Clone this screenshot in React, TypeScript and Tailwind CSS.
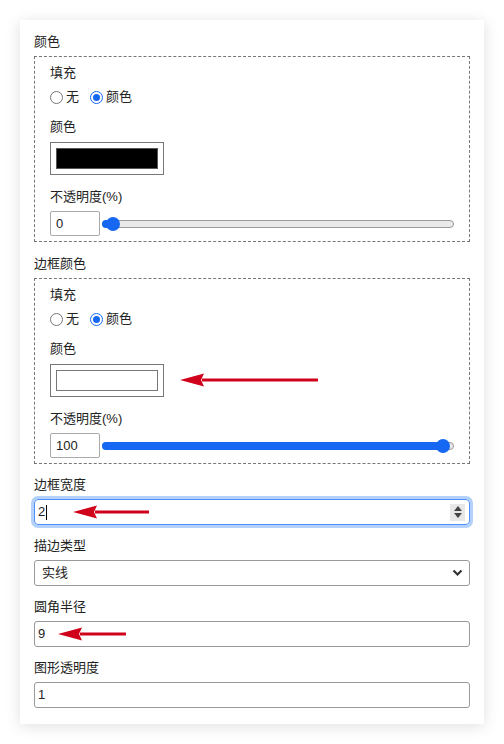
import React from "react";

const font = { fontFamily: '"Liberation Sans", "Noto Sans CJK SC", sans-serif' };

function Radio({ checked }: { checked?: boolean }) {
  return checked ? (
    <span className="flex h-[13px] w-[13px] items-center justify-center rounded-full border-[1.5px] border-[#1668f2] bg-white">
      <span className="h-[7px] w-[7px] rounded-full bg-[#1668f2]" />
    </span>
  ) : (
    <span className="h-[13px] w-[13px] rounded-full border border-[#767676] bg-white" />
  );
}

function Arrow({ width }: { width: number }) {
  return (
    <svg width={width} height="14" viewBox={`0 0 ${width} 14`}>
      <path d={`M22 5.5 H${width} V8.5 H22 Z`} fill="#d0021b" />
      <path d="M0 7 L24 0.5 L21 7 L24 13.5 Z" fill="#d0021b" />
    </svg>
  );
}

function Slider({ value }: { value: number }) {
  // thumb travels 330px inside a 352px track
  const left = 4 + value * 3.3;
  return (
    <div className="relative ml-[2px] h-[14px] w-[352px]">
      <div className="absolute left-0 right-0 top-[3px] h-[8px] rounded-full border border-[#999] bg-[#e9e9e9]" />
      <div
        className="absolute left-0 top-[3px] h-[8px] rounded-full bg-[#1668f2]"
        style={{ width: left + 7 }}
      />
      <div
        className="absolute top-0 h-[14px] w-[14px] rounded-full bg-[#1668f2]"
        style={{ left }}
      />
    </div>
  );
}

function ColorBlock({ dark, arrow }: { dark?: boolean; arrow?: boolean }) {
  return (
    <div className="border border-dashed border-[#777] px-[15px] pb-[5px] pt-[6px]">
      <div className="h-[20px] leading-[20px]">填充</div>
      <div className="mt-[4px] flex h-[20px] items-center">
        <Radio />
        <span className="ml-[3px]">无</span>
        <span className="ml-[11px]">
          <Radio checked />
        </span>
        <span className="ml-[3px]">颜色</span>
      </div>
      <div className="mt-[10px] h-[20px] leading-[20px]">颜色</div>
      <div className="relative mt-[5px] flex items-center">
        <div className="h-[33px] w-[114px] border border-[#777] bg-white p-[5px]">
          <div className={dark ? "h-full w-full border border-[#555] bg-black" : "h-full w-full border border-[#777] bg-white"} />
        </div>
        {arrow && (
          <div className="absolute left-[130px] top-[9px]">
            <Arrow width={138} />
          </div>
        )}
      </div>
      <div className="mt-[12px] h-[20px] leading-[20px]">不透明度(%)</div>
      <div className="mt-[4px] flex h-[25px] items-center">
        <div className="flex h-[25px] w-[50px] items-center rounded-[2px] border border-[#aaa] pl-[5px]">
          {dark ? "0" : "100"}
        </div>
        <Slider value={dark ? 0 : 100} />
      </div>
    </div>
  );
}

function Label({ children }: { children: React.ReactNode }) {
  return <div className="mb-[4px] h-[20px] leading-[20px]">{children}</div>;
}

export default function App() {
  return (
    <div className="min-h-screen bg-white p-[20px] text-[13px] text-[#222]" style={font}>
      <div className="flex w-[464px] flex-col bg-white px-[14px] pb-[16px] pt-[12px] shadow-[0_2px_14px_rgba(0,0,0,0.13)]">
        <Label>颜色</Label>
        <ColorBlock dark />

        <div className="mt-[12px]">
          <Label>边框颜色</Label>
          <ColorBlock arrow />
        </div>

        <div className="mt-[11px]">
          <Label>边框宽度</Label>
          <div className="relative flex h-[26px] items-center rounded-[4px] border border-[#4d90fe] pl-[3px] ring-[3px] ring-[#b3d1fb]">
            <span>2</span>
            <span className="ml-[1px] h-[15px] w-[1px] bg-black" />
            <div className="absolute left-[38px] top-[5px]">
              <Arrow width={76} />
            </div>
            <div className="ml-auto mr-[4px] flex h-[17px] w-[15px] flex-col items-center justify-center gap-[2px] bg-[#e8e8e8]">
              <svg width="8" height="5" viewBox="0 0 8 5"><path d="M4 0 L8 5 H0 Z" fill="#444" /></svg>
              <svg width="8" height="5" viewBox="0 0 8 5"><path d="M0 0 H8 L4 5 Z" fill="#444" /></svg>
            </div>
          </div>
        </div>

        <div className="mt-[11px]">
          <Label>描边类型</Label>
          <div className="flex h-[26px] items-center rounded-[3px] border border-[#999] pl-[7px] pr-[6px]">
            <span>实线</span>
            <svg className="ml-auto" width="11" height="8" viewBox="0 0 11 8">
              <path d="M1.5 1.5 L5.5 5.5 L9.5 1.5" fill="none" stroke="#333" strokeWidth="2.2" />
            </svg>
          </div>
        </div>

        <div className="mt-[11px]">
          <Label>圆角半径</Label>
          <div className="relative flex h-[26px] items-center rounded-[3px] border border-[#999] pl-[3px]">
            <span>9</span>
            <div className="absolute left-[23px] top-[5px]">
              <Arrow width={68} />
            </div>
          </div>
        </div>

        <div className="mt-[11px]">
          <Label>图形透明度</Label>
          <div className="flex h-[26px] items-center rounded-[3px] border border-[#999] pl-[3px]">
            <span>1</span>
          </div>
        </div>
      </div>
    </div>
  );
}
